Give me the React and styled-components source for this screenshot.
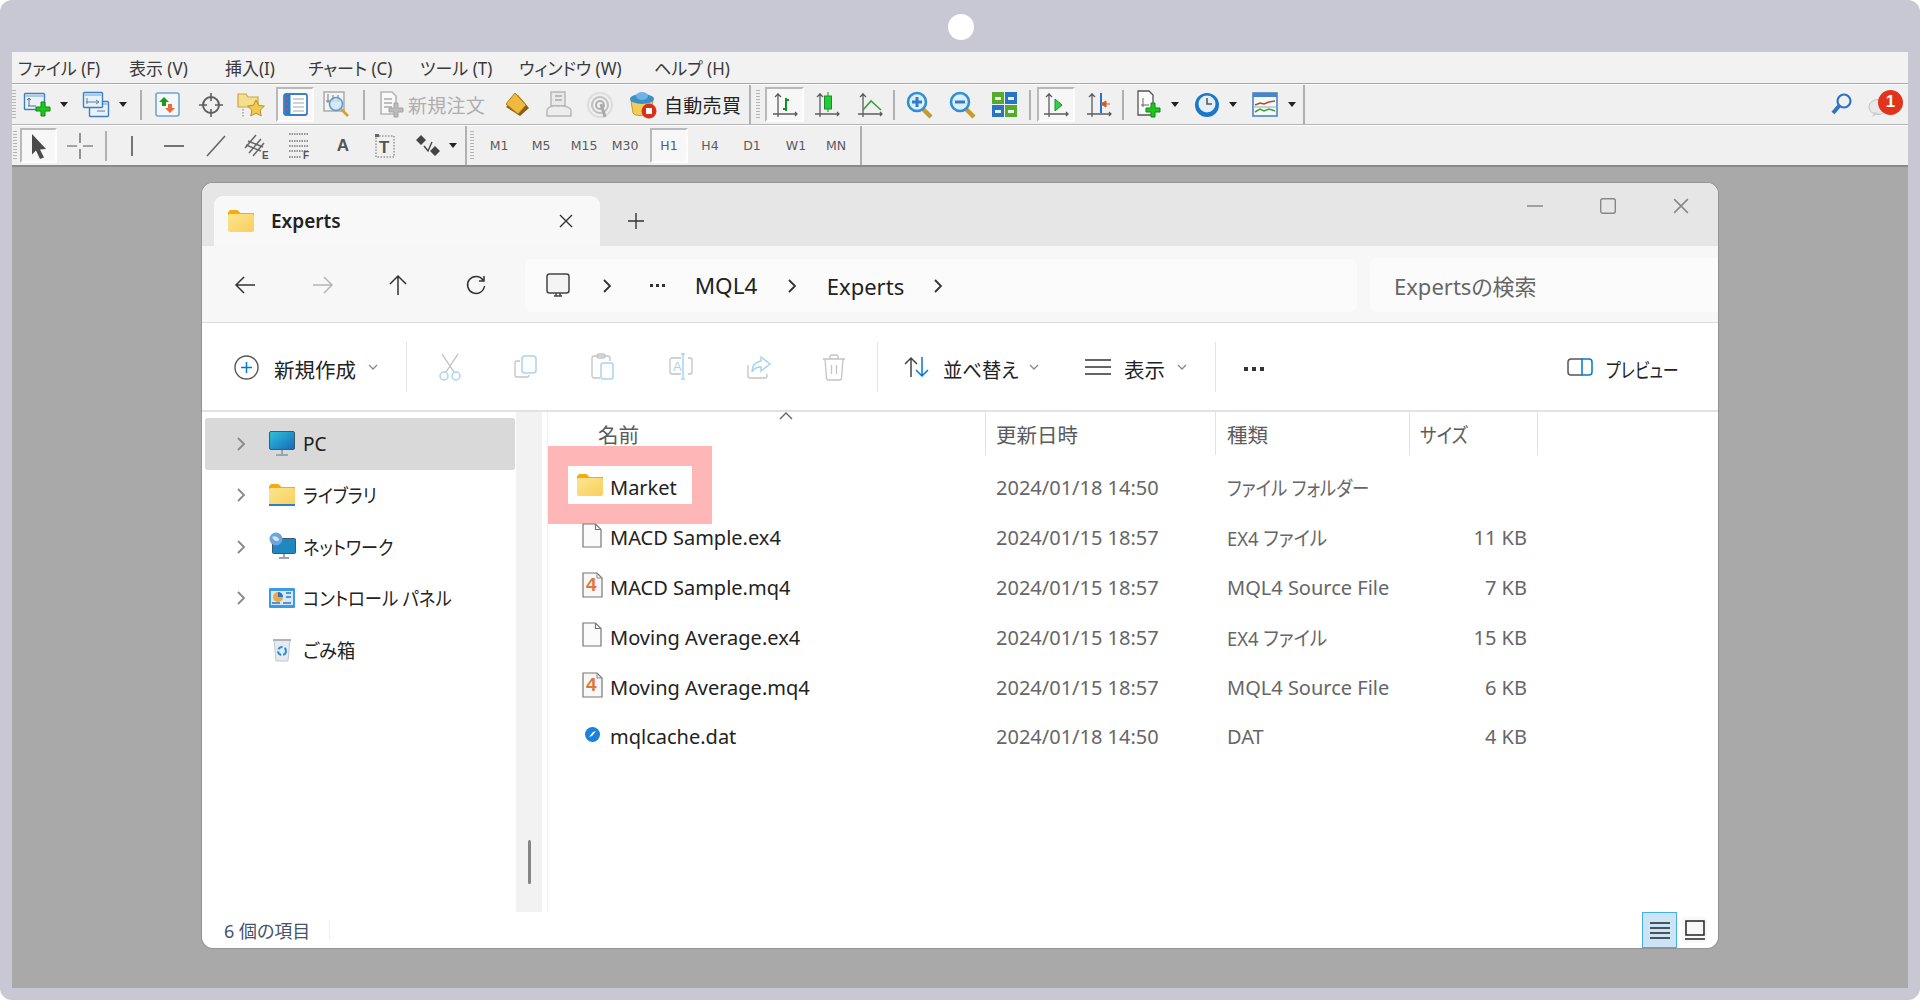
import React from 'react'
import styled, { createGlobalStyle } from 'styled-components'

const GlobalStyle = createGlobalStyle`
  html, body { margin: 0; background: #fff; }
  body {
    font-family: "Noto Sans", "Noto Sans CJK JP", sans-serif;
    font-feature-settings: "palt";
    color: #222;
  }
  svg { display: block; flex: none; overflow: visible; }
`

const Frame = styled.div`
  height: 1000px;
  box-sizing: border-box;
  padding: 52px 12px 12px;
  background: #c8c8d4;
  border-radius: 12px;
  position: relative;
`

const Camera = styled.div`
  position: absolute;
  left: 948px;
  top: 14px;
  width: 26px;
  height: 26px;
  border-radius: 50%;
  background: #fff;
`

const AppShell = styled.div`
  height: 100%;
  display: flex;
  flex-direction: column;
  background: #a9a9a9;
`

// the reference font has narrow kana, so kana heavy labels get squeezed
const Squeeze = styled.span`
  display: inline-block;
  white-space: nowrap;
  transform: scaleX(${p => p.$sx || 1});
  transform-origin: left center;
`

/* ---------- MT4 chrome ---------- */

const MenuBar = styled.div`
  height: 31px;
  box-sizing: content-box;
  display: flex;
  align-items: center;
  padding-left: 6px;
  background: #f2f2f2;
  border-bottom: 1px solid #a8a8a8;
`

const MenuItem = styled.span`
  width: ${p => p.$w}px;
  flex: none;
  font-size: 17.5px;
  white-space: nowrap;
  color: #3a3a3a;
`

const ToolRow = styled.div`
  height: ${p => p.$h}px;
  display: flex;
  align-items: center;
  background: #f0f0f0;
  border-top: 1px solid #fff;
  border-bottom: ${p => p.$bottom};
  box-sizing: border-box;
`

const Grip = styled.div`
  flex: none;
  width: 4px;
  height: 30px;
  margin-left: ${p => p.$ml || 0}px;
  margin-right: ${p => p.$mr || 0}px;
  background: repeating-linear-gradient(to bottom, #b4b4b4 0 1px, transparent 1px 3px);
`

const ToolSep = styled.div`
  flex: none;
  width: 2px;
  height: ${p => p.$h || 30}px;
  margin-left: ${p => p.$ml || 0}px;
  margin-right: ${p => p.$mr || 0}px;
  background: #b0b0b0;
`

const Cell = styled.div`
  flex: none;
  width: ${p => p.$w}px;
  height: ${p => (p.$pressed ? 35 : 30)}px;
  margin-left: ${p => p.$ml || 0}px;
  display: flex;
  align-items: center;
  justify-content: center;
  box-sizing: border-box;
  ${p => p.$pressed && `
    background: #f7f7f7;
    border-top: 2px solid #b9b9b9;
    border-left: 2px solid #b9b9b9;
    border-right: 2px solid #fdfdfd;
    border-bottom: 2px solid #fdfdfd;
  `}
`

const Caret = styled.div`
  width: 0;
  height: 0;
  border-left: 4px solid transparent;
  border-right: 4px solid transparent;
  border-top: 5px solid #222;
`

const ToolLabel = styled.span`
  flex: none;
  width: ${p => p.$w}px;
  margin-left: ${p => p.$ml || 0}px;
  font-size: 19px;
  letter-spacing: 0.3px;
  white-space: nowrap;
  color: ${p => (p.$muted ? '#aeaeae' : '#222')};
`

const Period = styled.span`
  font-family: "DejaVu Sans", sans-serif;
  font-size: 12.5px;
  color: #5a5a5a;
`

const RightTools = styled.div`
  margin-left: auto;
  display: flex;
  align-items: center;
  width: 78px;
  height: 24px;
  gap: 16px;
  position: relative;
`

const ChatWrap = styled.div`
  margin-top: 7px;
`

const Badge = styled.div`
  position: absolute;
  left: 48px;
  top: -3px;
  width: 25px;
  height: 25px;
  border-radius: 50%;
  background: #e2341d;
  color: #fff;
  font: 700 17px "Liberation Sans", sans-serif;
  display: flex;
  align-items: center;
  justify-content: center;
`

const Workspace = styled.div`
  flex: 1;
  display: flex;
  align-items: flex-start;
  padding: 16px 0 0 190px;
  border-top: 2px solid #8a8a8a;
`

/* ---------- Explorer window ---------- */

const Win = styled.div`
  width: 1516px;
  height: 765px;
  display: flex;
  flex-direction: column;
  background: #fff;
  border-radius: 11px;
  box-shadow: 0 0 0 1px #939393;
  overflow: hidden;
`

const TitleBar = styled.div`
  height: 63px;
  flex: none;
  box-sizing: border-box;
  padding: 13px 0 0 12px;
  display: flex;
  background: #e6e6e6;
`

const Tab = styled.div`
  width: 386px;
  height: 50px;
  box-sizing: border-box;
  padding: 0 27px 0 14px;
  display: flex;
  align-items: center;
  background: #f8f8f8;
  border-radius: 9px 9px 0 0;
`

const TabTitle = styled.span`
  margin-left: 17px;
  font-size: 19px;
  font-weight: 600;
  color: #222;
`

const TabClose = styled.div`
  margin-left: auto;
`

const NewTab = styled.div`
  margin-left: 28px;
  height: 50px;
  display: flex;
  align-items: center;
`

const WinControls = styled.div`
  margin-left: auto;
  margin-top: -13px;
  display: flex;
  height: 46px;
`

const WinControl = styled.div`
  width: ${p => p.$w}px;
  display: flex;
  align-items: center;
  justify-content: center;
`

const AddressRow = styled.div`
  height: 77px;
  flex: none;
  box-sizing: border-box;
  padding: 13px 0 0 5px;
  display: flex;
  background: #f7f7f7;
  border-bottom: 1px solid #dcdcdc;
`

const NavButton = styled.div`
  width: ${p => p.$w}px;
  height: 52px;
  display: flex;
  align-items: center;
  justify-content: center;
`

const AddressBox = styled.div`
  width: 832px;
  height: 53px;
  margin-left: 9px;
  box-sizing: border-box;
  padding-left: 20px;
  display: flex;
  align-items: center;
  background: #fbfbfb;
  border-radius: 7px;
`

const Crumb = styled.div`
  flex: none;
  width: ${p => p.$w}px;
  margin-left: ${p => p.$ml || 0}px;
  display: flex;
  justify-content: center;
  font-size: ${p => p.$fs || 22}px;
  white-space: nowrap;
  color: #222;
`

const SearchBox = styled.div`
  flex: 1;
  height: 54px;
  margin-left: 13px;
  margin-top: -1px;
  box-sizing: border-box;
  padding-left: 24px;
  display: flex;
  align-items: center;
  background: #fbfbfb;
  border-radius: 7px 0 0 7px;
  font-size: 22px;
  color: #666;
`

const CommandBar = styled.div`
  height: 89px;
  flex: none;
  box-sizing: border-box;
  padding: 5px 41px 0 32px;
  display: flex;
  align-items: center;
  background: #fff;
  border-bottom: 2px solid #e2e2e2;
`

const CmdIcon = styled.div`
  flex: none;
  width: ${p => p.$w}px;
  margin-left: ${p => p.$ml || 0}px;
  margin-top: ${p => p.$mt ?? -4}px;
  display: flex;
  justify-content: center;
`

const CmdText = styled.span`
  flex: none;
  width: ${p => p.$w}px;
  margin-left: ${p => p.$ml || 0}px;
  font-size: 20.5px;
  white-space: nowrap;
  color: #222;
`

const CmdSep = styled.div`
  flex: none;
  width: 1px;
  height: 50px;
  margin-left: ${p => p.$ml}px;
  margin-top: -4px;
  background: #e4e4e4;
`

const Body = styled.div`
  flex: 1;
  min-height: 0;
  display: flex;
`

const Nav = styled.div`
  width: 314px;
  flex: none;
  box-sizing: border-box;
  padding: 6px 0 0 3px;
`

const NavRow = styled.div`
  width: 310px;
  height: 51.5px;
  box-sizing: border-box;
  padding-left: 30px;
  display: flex;
  align-items: center;
  border-radius: 3px;
  background: ${p => (p.$selected ? '#d9d9d9' : 'transparent')};
`

const NavChevron = styled.div`
  width: 12px;
  flex: none;
  display: flex;
  justify-content: center;
`

const NavIcon = styled.div`
  width: 26px;
  flex: none;
  margin-left: 22px;
  display: flex;
  justify-content: center;
`

const NavLabel = styled.span`
  margin-left: 8px;
  font-size: 19px;
  white-space: nowrap;
  color: #222;
`

const NavScroll = styled.div`
  width: 26px;
  flex: none;
  box-sizing: border-box;
  padding-bottom: 28px;
  display: flex;
  justify-content: center;
  align-items: flex-end;
  background: #f2f2f2;
`

const NavThumb = styled.div`
  width: 3px;
  height: 44px;
  border-radius: 2px;
  background: #858585;
`

const Main = styled.div`
  flex: 1;
  margin-left: 5px;
  border-left: 1px solid #f0f0f0;
`

const HeaderRow = styled.div`
  height: 43px;
  display: grid;
  grid-template-columns: 438px 230px 194px 128px;
  position: relative;
`

const HeaderCell = styled.div`
  box-sizing: border-box;
  padding-left: ${p => p.$pl}px;
  display: flex;
  align-items: center;
  font-size: 20.5px;
  color: #5b5b5b;
  border-right: 1px solid #e2e2e2;
`

const SortMark = styled.div`
  position: absolute;
  left: 231px;
  top: 0;
`

const FileList = styled.div`
  padding-top: 8px;
`

const FileRow = styled.div`
  height: 49.8px;
  display: grid;
  grid-template-columns: 438px 230px 194px 128px;
  align-items: center;
  font-size: 20px;
  color: #666;
`

const NameCell = styled.div`
  padding-left: 33px;
  display: flex;
  align-items: center;
  color: #222;
  white-space: nowrap;
`

const FileIcon = styled.div`
  width: 22px;
  flex: none;
  margin-right: 7px;
  margin-top: -5px;
  display: flex;
  justify-content: center;
`

const HighlightedName = styled.div`
  width: 124px;
  height: 38px;
  margin: 0 0 6px 20px;
  box-sizing: border-box;
  padding: 6px 0 0 9px;
  display: flex;
  align-items: center;
  gap: 7px;
  background: #fff;
  box-shadow: 0 0 0 20px #ffb6b6;
  color: #222;
`

const MarketFolder = styled.div`
  margin-top: -5px;
`

const TextCell = styled.div`
  padding-left: ${p => p.$pl}px;
  white-space: nowrap;
`

const SizeCell = styled.div`
  padding-right: 11px;
  text-align: right;
`

const StatusBar = styled.div`
  flex: none;
  height: 36px;
  box-sizing: border-box;
  padding: 0 11px 0 22px;
  display: flex;
  align-items: center;
  font-size: 18px;
  color: #44546a;
`

const StatusSep = styled.div`
  width: 1px;
  height: 18px;
  margin-left: 19px;
  background: #eee;
`

const ViewButton = styled.div`
  height: ${p => (p.$active ? 36 : 26)}px;
  width: ${p => (p.$active ? 35 : 25)}px;
  margin-left: ${p => (p.$active ? 'auto' : '5px')};
  box-sizing: border-box;
  display: flex;
  align-items: center;
  justify-content: center;
  border: ${p => (p.$active ? '1.5px solid #47ade6' : 'none')};
  background: ${p => (p.$active ? '#cce4f7' : '#f8f8f8')};
  border-radius: ${p => (p.$active ? 0 : 3)}px;
`

/* ---------- toolbar icons ---------- */

const Plus = ({ x, y, fill = '#1fc61f', stroke = '#0d8a0d' }) => (
  <path transform={`translate(${x} ${y})`} d="M5 0h4v5h5v4H9v5H5V9H0V5h5z" fill={fill} stroke={stroke} strokeWidth="1" />
)

const ChartWin = ({ x = 0, y = 0, w = 19, h = 15 }) => (
  <g transform={`translate(${x} ${y})`}>
    <rect x="0.5" y="0.5" width={w} height={h} rx="1" fill="#e9f1f9" stroke="#3f7fc0" strokeWidth="1.4" />
    <path d={`M1 3h${w - 1}`} stroke="#a9c9e8" strokeWidth="2" />
  </g>
)

const NewChartIcon = () => (
  <svg width="27" height="24" viewBox="0 0 27 24">
    <ChartWin w={20} h={16} />
    <path d="M5 5v8M4 13h8M3 7l2-2 2 2" fill="none" stroke="#667" strokeWidth="1" />
    <Plus x={12} y={9} />
  </svg>
)

const CopyChartIcon = () => (
  <svg width="27" height="26" viewBox="0 0 27 26">
    <ChartWin x={6} y={9} w={19} h={15} />
    <ChartWin w={19} h={15} />
    <path d="M4 6v6M3 10h13M13 8l3 2-3 2M14 19h8" fill="none" stroke="#5f7f9f" strokeWidth="1" />
  </svg>
)

const MarketIcon = () => (
  <svg width="25" height="25" viewBox="0 0 25 25">
    <rect x="1" y="1" width="23" height="23" rx="2" fill="#f4f7fb" stroke="#6ea4da" strokeWidth="1.6" />
    <path d="M9 5l5 5h-3v4H7v-4H4z" fill="#12a012" />
    <path d="M15 21l-5-5h3v-4h4v4h3z" fill="#ef6a3a" />
  </svg>
)

const CrossIcon = () => (
  <svg width="24" height="24" viewBox="0 0 24 24" fill="none" stroke="#5e5e5e">
    <circle cx="12" cy="12" r="8" strokeWidth="2" />
    <path d="M12 0v8M12 16v8M0 12h8M16 12h8" strokeWidth="1.6" />
  </svg>
)

const FavIcon = () => (
  <svg width="28" height="26" viewBox="0 0 28 26">
    <path d="M1 2h8l2 3h10v10H1z" fill="#f5df8c" stroke="#caa545" strokeWidth="1.2" />
    <path d="M19 8l2.6 5.3 5.8.8-4.2 4 1 5.8-5.2-2.8-5.2 2.8 1-5.8-4.2-4 5.8-.8z" fill="#f2c94a" stroke="#b98f2c" strokeWidth="1" />
    <path d="M6 17v8" stroke="#777" strokeDasharray="1.5 1.5" />
  </svg>
)

const NavigatorIcon = () => (
  <svg width="25" height="23" viewBox="0 0 25 23">
    <rect x="1" y="1" width="23" height="21" rx="2" fill="#fff" stroke="#3d7fc2" strokeWidth="1.8" />
    <rect x="1.5" y="1.5" width="6" height="20" fill="#2c7cc6" />
    <path d="M10 6h11M10 10h11M10 14h11M10 18h11" stroke="#9aa7b5" />
    <path d="M4 5v2M4 10v2M4 15v2" stroke="#e44" strokeWidth="1.5" />
  </svg>
)

const DataWinIcon = () => (
  <svg width="28" height="27" viewBox="0 0 28 27">
    <rect x="1" y="1" width="20" height="19" fill="#f4f4f4" stroke="#aaa" strokeWidth="1.5" />
    <path d="M5 3v9M3 10h14M10 4v7M15 4v7" stroke="#777" fill="none" />
    <circle cx="13" cy="13" r="6.5" fill="#cfe5f7" fillOpacity="0.8" stroke="#5f9bcf" strokeWidth="1.6" />
    <path d="M18 18l7 7" stroke="#d9a02e" strokeWidth="2.6" />
  </svg>
)

const OrderIcon = () => (
  <svg width="26" height="28" viewBox="0 0 26 28">
    <path d="M2 1h11l4 4v18H2z" fill="#f8f8f8" stroke="#b5b5b5" strokeWidth="1.6" />
    <path d="M5 8h8M5 12h8M5 16h8" stroke="#aaa" strokeWidth="1.5" />
    <Plus x={10} y={12} fill="#bcbcbc" stroke="#a5a5a5" />
  </svg>
)

const DiamondIcon = () => (
  <svg width="26" height="26" viewBox="0 0 26 26">
    <path d="M14 3l11 13-9 8L2 15z" fill="#8d5c12" />
    <path d="M11 1l11 12-8 9L2 12z" fill="#eeb93c" stroke="#b57e1d" />
  </svg>
)

const ArchiveIcon = () => (
  <svg width="26" height="27" viewBox="0 0 26 27">
    <path d="M5 1h14v14H5z" fill="#e9e9e9" stroke="#b5b5b5" strokeWidth="1.4" />
    <path d="M9 5h7M9 9h7" stroke="#aaa" strokeWidth="1.6" />
    <path d="M1 20c0-4 6-6 11-5 5-1 13 1 13 5v5H1z" fill="#ededed" stroke="#b5b5b5" strokeWidth="1.4" />
  </svg>
)

const SignalIcon = () => (
  <svg width="26" height="26" viewBox="0 0 26 26" fill="none">
    <circle cx="13" cy="13" r="12" stroke="#dcdcdc" strokeWidth="2" />
    <circle cx="13" cy="13" r="8" stroke="#c0c0c0" strokeWidth="2" />
    <circle cx="13" cy="13" r="4" stroke="#b0b0b0" strokeWidth="2" />
    <path d="M14 12l4 13" stroke="#aaa" strokeWidth="3" />
  </svg>
)

const AutoIcon = () => (
  <svg width="28" height="28" viewBox="0 0 28 28">
    <path d="M2 10h22l-3 12c-1 3-15 4-17 0z" fill="#f2cd5a" stroke="#c59b33" />
    <ellipse cx="13" cy="8" rx="12" ry="5" fill="#3d8fc9" />
    <ellipse cx="13" cy="5" rx="6" ry="4" fill="#6db4e2" />
    <circle cx="20" cy="20" r="7.5" fill="#d9301c" />
    <rect x="17" y="17" width="6" height="6" fill="#fff" />
  </svg>
)

const AxesPlain = ({ children }) => (
  <svg width="26" height="28" viewBox="0 0 26 28">
    <path d="M6 2v24M1 23h24M23 21l2 2-2 2M3 6l3-3 3 3" fill="none" stroke="#5c5c5c" strokeWidth="1.3" />
    {children}
  </svg>
)

const BarChartIcon = () => (
  <AxesPlain>
    <path d="M14 7v13M14 18h-3M14 9h3" fill="none" stroke="#14902a" strokeWidth="2" />
  </AxesPlain>
)

const CandleIcon = () => (
  <AxesPlain>
    <path d="M14 1v20" stroke="#14902a" />
    <rect x="10.5" y="5" width="7" height="13" fill="#25c93a" stroke="#14902a" />
  </AxesPlain>
)

const LineChartIcon = () => (
  <AxesPlain>
    <path d="M6 19l8-9 10 9" fill="none" stroke="#3aa23a" strokeWidth="1.6" />
  </AxesPlain>
)

const ScrollIcon = () => (
  <AxesPlain>
    <path d="M12 8l7 6-7 6z" fill="#36d04a" stroke="#14902a" />
  </AxesPlain>
)

const ShiftIcon = () => (
  <AxesPlain>
    <path d="M15 2v20" stroke="#2f6fc0" strokeWidth="2" />
    <path d="M24 13h-4v-3l-5 3 5 3v-3" fill="#d65a20" stroke="#d65a20" />
  </AxesPlain>
)

const ZoomIcon = ({ minus }) => (
  <svg width="27" height="28" viewBox="0 0 27 28">
    <path d="M16 17l9 9" stroke="#c89a2c" strokeWidth="4.5" />
    <circle cx="11" cy="11" r="9" fill="#dceefb" stroke="#2f8ed4" strokeWidth="2.6" />
    <path d={minus ? 'M6 11h10' : 'M6 11h10M11 6v10'} stroke="#2f7fc4" strokeWidth="3" />
  </svg>
)

const TileIcon = () => (
  <svg width="25" height="25" viewBox="0 0 25 25">
    <rect x="0" y="0" width="12" height="12" fill="#55ab2c" />
    <rect x="13" y="0" width="12" height="12" fill="#2a74c8" />
    <rect x="0" y="13" width="12" height="12" fill="#2a74c8" />
    <rect x="13" y="13" width="12" height="12" fill="#55ab2c" />
    <path d="M3 5h6v3H3zM16 5h6v3h-6zM3 18h6v3H3zM16 18h6v3h-6z" fill="#e9f4e4" />
  </svg>
)

const IndicatorIcon = () => (
  <svg width="28" height="30" viewBox="0 0 28 30">
    <path d="M2 1h11l4 4v20H2z" fill="#fbfbfb" stroke="#555" strokeWidth="1.3" />
    <path d="M7 8v9M5 15h8" stroke="#666" fill="none" />
    <Plus x={10} y={13} />
  </svg>
)

const ClockIcon = () => (
  <svg width="26" height="26" viewBox="0 0 26 26">
    <circle cx="13" cy="13" r="12" fill="#1b78c8" />
    <circle cx="13" cy="12" r="8.5" fill="#e4eef6" />
    <path d="M13 6v6h5" fill="none" stroke="#555" strokeWidth="1.5" />
  </svg>
)

const TemplateIcon = () => (
  <svg width="26" height="25" viewBox="0 0 26 25">
    <rect x="1" y="1" width="24" height="23" fill="#f6f8fb" stroke="#4a86c5" strokeWidth="1.6" />
    <rect x="1" y="1" width="24" height="4" fill="#4a86c5" />
    <path d="M3 13l5-2 4 1 5-2 6-1" fill="none" stroke="#b5501e" strokeWidth="1.5" />
    <path d="M3 20l5-3 4 2 5-2 6 2" fill="none" stroke="#3aa23a" strokeWidth="1.5" />
    <path d="M1 15h24" stroke="#9ab" />
  </svg>
)

const FinderIcon = () => (
  <svg width="22" height="24" viewBox="0 0 22 24" fill="none">
    <circle cx="14" cy="8" r="6.5" stroke="#2f72c4" strokeWidth="2.2" />
    <path d="M9 13l-6 7" stroke="#2f72c4" strokeWidth="4" />
  </svg>
)

const ChatIcon = () => (
  <svg width="20" height="18" viewBox="0 0 20 18">
    <ellipse cx="10" cy="8" rx="9" ry="7.5" fill="#e9e9e9" stroke="#c2c2c2" />
    <path d="M6 13l-2 5 7-4z" fill="#cfcfcf" />
  </svg>
)

const CursorIcon = () => (
  <svg width="20" height="26" viewBox="0 0 20 26">
    <path d="M3 1l14 15-6 .5 4 8-4 1.500-4-8.500-4 4z" fill="#4a4a4a" />
  </svg>
)

const CrosshairThin = () => (
  <svg width="26" height="26" viewBox="0 0 26 26" stroke="#555" strokeWidth="1.2">
    <path d="M13 0v10M13 16v10M0 13h10M16 13h10" />
  </svg>
)

const VLine = () => <svg width="4" height="22" viewBox="0 0 4 22"><path d="M2 1v20" stroke="#555" strokeWidth="1.6" /></svg>
const HLine = () => <svg width="20" height="4" viewBox="0 0 20 4"><path d="M0 2h20" stroke="#555" strokeWidth="1.6" /></svg>
const Trend = () => <svg width="20" height="22" viewBox="0 0 20 22"><path d="M1 21L19 1" stroke="#666" strokeWidth="1.6" /></svg>

const EquiIcon = () => (
  <svg width="26" height="28" viewBox="0 0 26 28">
    <path d="M1 16L12 3M5 21L17 7M9 24L20 11M2 13l15 6M4 9l15 6" fill="none" stroke="#666" strokeWidth="1.5" />
    <text x="18" y="27" fontFamily="Liberation Sans" fontWeight="700" fontSize="10" fill="#555">E</text>
  </svg>
)

const FiboIcon = () => (
  <svg width="26" height="26" viewBox="0 0 26 26">
    <path d="M1 1h20M1 8h20M1 13h20M1 18h20M1 24h12" fill="none" stroke="#777" strokeWidth="1.4" strokeDasharray="1.5 1" />
    <text x="15" y="26" fontFamily="Liberation Sans" fontWeight="700" fontSize="10" fill="#555">F</text>
  </svg>
)

const TextA = styled.span`
  font: 700 17px "Liberation Sans", sans-serif;
  color: #555;
`

const LabelIcon = () => (
  <svg width="20" height="24" viewBox="0 0 20 24">
    <rect x="1" y="2" width="18" height="21" fill="none" stroke="#666" strokeDasharray="1.5 1.5" />
    <rect x="0" y="0" width="4" height="3" fill="#666" />
    <text x="4" y="19" fontFamily="Liberation Sans" fontWeight="700" fontSize="17" fill="#555">T</text>
  </svg>
)

const ArrowsIcon = () => (
  <svg width="24" height="22" viewBox="0 0 24 22" fill="#444">
    <path d="M0 5l5-5 5 5-5 5zM14 16l5-5 5 5-5 5z" />
    <path d="M8 11l4 5 4-9" fill="none" stroke="#444" strokeWidth="1.4" />
  </svg>
)

/* ---------- explorer icons ---------- */

const FolderIcon = ({ w = 26, h = 22, line }) => (
  <svg width={w} height={h} viewBox="0 0 26 22">
    <defs>
      <linearGradient id="folderFill" x1="0" y1="0" x2="1" y2="1">
        <stop offset="0" stopColor="#fde58d" />
        <stop offset="1" stopColor="#f8cf5e" />
      </linearGradient>
    </defs>
    <path d="M1 1.500a1.500 1.500 0 0 1 1.500-1.500h7l3 3H26v4H0V2z" fill="#f3ad12" />
    <path d="M0 6a2 2 0 0 1 2-2h22a2 2 0 0 1 2 2v14a2 2 0 0 1-2 2H2a2 2 0 0 1-2-2z" fill="url(#folderFill)" />
    {line && <path d="M0 21h26" stroke="#2f7fc4" strokeWidth="2" />}
  </svg>
)

const Chevron = ({ color = '#333', size = 10 }) => (
  <svg width={size} height={size * 1.6} viewBox="0 0 10 16" fill="none" stroke={color} strokeWidth="1.800">
    <path d="M2 2l6 6-6 6" />
  </svg>
)

const DownMark = () => (
  <svg width="10" height="6" viewBox="0 0 10 6" fill="none" stroke="#888" strokeWidth="1.3">
    <path d="M1 1l4 4 4-4" />
  </svg>
)

const CloseMark = ({ size = 14, color = '#333', sw = 1.4 }) => (
  <svg width={size} height={size} viewBox="0 0 14 14" stroke={color} strokeWidth={sw}>
    <path d="M1 1l12 12M13 1L1 13" />
  </svg>
)

const PlusMark = () => (
  <svg width="16" height="16" viewBox="0 0 16 16" stroke="#333" strokeWidth="1.4">
    <path d="M8 0v16M0 8h16" />
  </svg>
)

const Arrow = ({ dir, color = '#333' }) => {
  const paths = {
    left: 'M1 10h19M9 2l-8 8 8 8',
    right: 'M1 10h19M12 2l8 8-8 8',
    up: 'M10 20V1M2 9l8-8 8 8',
  }
  return (
    <svg width="21" height="21" viewBox="0 0 21 21" fill="none" stroke={color} strokeWidth="1.5">
      <path d={paths[dir]} />
    </svg>
  )
}

const RefreshIcon = () => (
  <svg width="20" height="21" viewBox="0 0 20 21" fill="none" stroke="#333" strokeWidth="1.5">
    <path d="M17 5a8.500 8.500 0 1 0 1.500 6M18 1v5h-5" />
  </svg>
)

const MonitorIcon = () => (
  <svg width="24" height="26" viewBox="0 0 24 26" fill="none" stroke="#444">
    <rect x="1" y="1" width="22" height="19" rx="2.500" strokeWidth="1.500" fill="#f4f4f4" />
    <path d="M8 23h8M10 20v3M14 20v3" strokeWidth="1.500" />
  </svg>
)

const Dots = ({ size = 3, gap = 3, color = '#333' }) => (
  <svg width={size * 3 + gap * 2} height={size} viewBox={`0 0 ${size * 3 + gap * 2} ${size}`} fill={color}>
    <rect x="0" width={size} height={size} />
    <rect x={size + gap} width={size} height={size} />
    <rect x={(size + gap) * 2} width={size} height={size} />
  </svg>
)

const NewIcon = () => (
  <svg width="25" height="25" viewBox="0 0 25 25" fill="none">
    <circle cx="12.500" cy="12.500" r="11.500" stroke="#555" strokeWidth="1.400" />
    <path d="M12.500 7v11M7 12.500h11" stroke="#0078d4" strokeWidth="1.500" />
  </svg>
)

const CutIcon = () => (
  <svg width="24" height="28" viewBox="0 0 24 28" fill="none">
    <path d="M4 1l12 18M20 1L8 19" stroke="#bdbdbd" strokeWidth="1.300" />
    <circle cx="6" cy="23" r="4" stroke="#a9d3f2" strokeWidth="1.500" />
    <circle cx="18" cy="23" r="4" stroke="#a9d3f2" strokeWidth="1.500" />
  </svg>
)

const CopyIcon = () => (
  <svg width="24" height="24" viewBox="0 0 24 24" fill="none">
    <path d="M6 6H3a2 2 0 0 0-2 2v12a2 2 0 0 0 2 2h10a2 2 0 0 0 2-2" stroke="#c4c4c4" strokeWidth="1.300" />
    <rect x="8" y="1" width="14" height="17" rx="3" stroke="#a9d3f2" strokeWidth="1.500" />
  </svg>
)

const PasteIcon = () => (
  <svg width="24" height="28" viewBox="0 0 24 28" fill="none">
    <path d="M9 25H3a2 2 0 0 1-2-2V5a2 2 0 0 1 2-2h14a2 2 0 0 1 2 2v3" stroke="#c4c4c4" strokeWidth="1.300" />
    <rect x="6" y="1" width="8" height="4" rx="1.500" stroke="#c4c4c4" strokeWidth="1.300" />
    <rect x="10" y="10" width="12" height="16" rx="2" stroke="#a9d3f2" strokeWidth="1.500" />
  </svg>
)

const RenameIcon = () => (
  <svg width="26" height="28" viewBox="0 0 26 28" fill="none">
    <path d="M13 5H4a2 2 0 0 0-2 2v12a2 2 0 0 0 2 2h9M20 5h2a2 2 0 0 1 2 2v12a2 2 0 0 1-2 2h-2" stroke="#c4c4c4" strokeWidth="1.300" />
    <path d="M13 1h4M13 26h4M15 1v25" stroke="#a9d3f2" strokeWidth="1.500" />
    <text x="5" y="18" fontFamily="Liberation Sans" fontSize="13" fill="#a9d3f2">A</text>
  </svg>
)

const ShareIcon = () => (
  <svg width="24" height="24" viewBox="0 0 24 24" fill="none">
    <path d="M1 10v11a2 2 0 0 0 2 2h15a2 2 0 0 0 2-2v-2" stroke="#c4c4c4" strokeWidth="1.300" />
    <path d="M14 2l9 7-9 7v-4c-4 0-7 1-9 5 0-6 3-10 9-11z" stroke="#a9d3f2" strokeWidth="1.500" />
  </svg>
)

const TrashIcon = () => (
  <svg width="24" height="27" viewBox="0 0 24 27" fill="none" stroke="#c4c4c4" strokeWidth="1.300">
    <path d="M1 5h22M8 5V3a2 2 0 0 1 2-2h4a2 2 0 0 1 2 2v2M3 5l1.500 19a2 2 0 0 0 2 2h11a2 2 0 0 0 2-2L21 5M9.500 11v9M14.500 11v9" />
  </svg>
)

const SortIcon = () => (
  <svg width="26" height="22" viewBox="0 0 26 22" fill="none" strokeWidth="1.500">
    <path d="M7 21V2M1 8l6-6 6 6" stroke="#444" />
    <path d="M17 1v19M11 14l6 6 6-6" stroke="#0078d4" transform="translate(1 0)" />
  </svg>
)

const ViewIcon = () => (
  <svg width="26" height="18" viewBox="0 0 26 18" stroke="#333" strokeWidth="1.500">
    <path d="M0 2h26M0 9h26M0 16h26" />
  </svg>
)

const PreviewIcon = () => (
  <svg width="26" height="18" viewBox="0 0 26 18" fill="none" strokeWidth="1.500">
    <path d="M15 1H4a3 3 0 0 0-3 3v10a3 3 0 0 0 3 3h11" stroke="#555" />
    <path d="M15 1h7a3 3 0 0 1 3 3v10a3 3 0 0 1-3 3h-7z" stroke="#0078d4" />
  </svg>
)

const SortCaret = () => (
  <svg width="14" height="8" viewBox="0 0 14 8" fill="none" stroke="#666" strokeWidth="1.400">
    <path d="M1 7l6-6 6 6" />
  </svg>
)

const PcColor = () => (
  <svg width="26" height="25" viewBox="0 0 26 25">
    <defs>
      <linearGradient id="pcFill" x1="0" y1="0" x2="1" y2="1">
        <stop offset="0" stopColor="#2cc4dc" />
        <stop offset="1" stopColor="#1668b8" />
      </linearGradient>
    </defs>
    <rect x="0.500" y="0.500" width="25" height="18" rx="1.500" fill="url(#pcFill)" stroke="#3f5870" />
    <path d="M13 19v4M7 24h12" stroke="#9aa5ae" strokeWidth="2" />
  </svg>
)

const NetworkColor = () => (
  <svg width="27" height="27" viewBox="0 0 27 27">
    <rect x="3.500" y="5.500" width="23" height="15" rx="1" fill="#1f88c0" stroke="#3f5870" />
    <path d="M15 21v3M10 25h10" stroke="#9aa5ae" strokeWidth="2" />
    <circle cx="7" cy="6" r="6.500" fill="#6aa5dc" />
    <path d="M3 4c3-2 6 0 7 2s-3 3-5 1z" fill="#cfe3f5" />
  </svg>
)

const ControlColor = () => (
  <svg width="26" height="20" viewBox="0 0 26 20">
    <rect x="0" y="0" width="26" height="20" rx="1" fill="#3d9ae6" />
    <rect x="2" y="3" width="22" height="14" fill="#d5eafb" />
    <circle cx="9" cy="9" r="5" fill="#f2a93a" />
    <path d="M9 4v5h5a5 5 0 0 0-5-5z" fill="#2b77c6" />
    <path d="M17 5h5M17 9h5M3 15h8M14 15h8" stroke="#2b77c6" strokeWidth="1.500" />
  </svg>
)

const BinColor = () => (
  <svg width="20" height="24" viewBox="0 0 20 24">
    <path d="M2 2h16l-2 21H4z" fill="#e6eaee" stroke="#c4c9ce" />
    <path d="M1 2h18" stroke="#aeb4ba" strokeWidth="2" />
    <circle cx="10" cy="13" r="4" fill="none" stroke="#2b8fe0" strokeWidth="2" strokeDasharray="5 2" />
  </svg>
)

const DocIcon = () => (
  <svg width="20" height="25" viewBox="0 0 20 25" fill="#fbfbfb" stroke="#777" strokeWidth="1.200">
    <path d="M1 1h12.500L19 6.500V24H1zM13.500 1v5.500H19" />
  </svg>
)

const Mq4Icon = () => (
  <svg width="21" height="26" viewBox="0 0 21 26">
    <path d="M1 1h14l5 5v19H1z" fill="#f8f8f8" stroke="#777" strokeWidth="1.200" />
    <path d="M15 1v5h5" fill="none" stroke="#888" />
    <text x="4" y="19" fontFamily="Liberation Sans" fontWeight="700" fontSize="19" fill="#e0773a">4</text>
  </svg>
)

const DatIcon = () => (
  <svg width="15" height="15" viewBox="0 0 15 15">
    <circle cx="7.500" cy="7.500" r="7.500" fill="#1c80dc" />
    <path d="M4 10l3-1 4-5-3 1z" fill="#fff" />
  </svg>
)

const files = [
  { name: 'MACD Sample.ex4', date: '2024/01/15 18:57', type: 'EX4 ファイル', sx: 0.92, size: '11 KB', icon: <DocIcon /> },
  { name: 'MACD Sample.mq4', date: '2024/01/15 18:57', type: 'MQL4 Source File', size: '7 KB', icon: <Mq4Icon /> },
  { name: 'Moving Average.ex4', date: '2024/01/15 18:57', type: 'EX4 ファイル', sx: 0.92, size: '15 KB', icon: <DocIcon /> },
  { name: 'Moving Average.mq4', date: '2024/01/15 18:57', type: 'MQL4 Source File', size: '6 KB', icon: <Mq4Icon /> },
  { name: 'mqlcache.dat', date: '2024/01/18 14:50', type: 'DAT', size: '4 KB', icon: <DatIcon /> },
]

const navItems = [
  { label: 'PC', icon: <PcColor />, selected: true, expand: true },
  { label: 'ライブラリ', sx: 0.9, icon: <FolderIcon line />, expand: true },
  { label: 'ネットワーク', sx: 0.9, icon: <NetworkColor />, expand: true },
  { label: 'コントロール パネル', sx: 0.91, icon: <ControlColor />, expand: true },
  { label: 'ごみ箱', sx: 0.96, icon: <BinColor /> },
]

const menus = [
  { label: 'ファイル (F)', w: 111 },
  { label: '表示 (V)', w: 96 },
  { label: '挿入(I)', w: 83 },
  { label: 'チャート (C)', w: 112 },
  { label: 'ツール (T)', w: 99 },
  { label: 'ウィンドウ (W)', w: 135 },
  { label: 'ヘルプ (H)', w: 80 },
]

const App = () => (
  <Frame>
    <GlobalStyle />
    <Camera />
    <AppShell>
      <MenuBar>
        {menus.map(m => <MenuItem key={m.label} $w={m.w}><Squeeze $sx={0.97}>{m.label}</Squeeze></MenuItem>)}
      </MenuBar>

      <ToolRow $h={41} $bottom="1px solid #b5b5b5">
        <Grip $mr={4} />
        <Cell $w={34}><NewChartIcon /></Cell>
        <Cell $w={20}><Caret /></Cell>
        <Cell $w={44}><CopyChartIcon /></Cell>
        <Cell $w={10}><Caret /></Cell>
        <ToolSep $ml={12} $mr={4} />
        <Cell $w={42}><MarketIcon /></Cell>
        <Cell $w={46}><CrossIcon /></Cell>
        <Cell $w={34}><FavIcon /></Cell>
        <Cell $w={38} $ml={8} $pressed><NavigatorIcon /></Cell>
        <Cell $w={46}><DataWinIcon /></Cell>
        <ToolSep $ml={3} $mr={3} />
        <Cell $w={32} $ml={8}><OrderIcon /></Cell>
        <ToolLabel $w={78} $muted>新規注文</ToolLabel>
        <Cell $w={40} $ml={11}><DiamondIcon /></Cell>
        <Cell $w={40} $ml={2}><ArchiveIcon /></Cell>
        <Cell $w={40} $ml={1}><SignalIcon /></Cell>
        <Cell $w={38} $ml={4}><AutoIcon /></Cell>
        <ToolLabel $w={76} $ml={2}>自動売買</ToolLabel>
        <ToolSep $ml={9} $h={39} />
        <Grip $ml={5} $mr={5} />
        <Cell $w={39} $pressed><BarChartIcon /></Cell>
        <Cell $w={46}><CandleIcon /></Cell>
        <Cell $w={40}><LineChartIcon /></Cell>
        <ToolSep $ml={3} />
        <Cell $w={42} $ml={3}><ZoomIcon /></Cell>
        <Cell $w={44}><ZoomIcon minus /></Cell>
        <Cell $w={40}><TileIcon /></Cell>
        <ToolSep $ml={5} />
        <Cell $w={38} $ml={6} $pressed><ScrollIcon /></Cell>
        <Cell $w={44} $ml={2}><ShiftIcon /></Cell>
        <ToolSep $ml={1} />
        <Cell $w={40} $ml={6}><IndicatorIcon /></Cell>
        <Cell $w={10}><Caret /></Cell>
        <Cell $w={40} $ml={7}><ClockIcon /></Cell>
        <Cell $w={10} $ml={1}><Caret /></Cell>
        <Cell $w={40} $ml={7}><TemplateIcon /></Cell>
        <Cell $w={10} $ml={2}><Caret /></Cell>
        <ToolSep $ml={6} $h={39} />
        <RightTools>
          <FinderIcon />
          <ChatWrap><ChatIcon /></ChatWrap>
          <Badge>1</Badge>
        </RightTools>
      </ToolRow>

      <ToolRow $h={40} $bottom="none">
        <Grip $ml={1} $mr={1} />
        <Cell $w={37} $ml={2} $pressed><CursorIcon /></Cell>
        <Cell $w={46}><CrosshairThin /></Cell>
        <ToolSep $ml={2} />
        <Cell $w={50}><VLine /></Cell>
        <Cell $w={34}><HLine /></Cell>
        <Cell $w={50}><Trend /></Cell>
        <Cell $w={32}><EquiIcon /></Cell>
        <Cell $w={56}><FiboIcon /></Cell>
        <Cell $w={28}><TextA>A</TextA></Cell>
        <Cell $w={56}><LabelIcon /></Cell>
        <Cell $w={30}><ArrowsIcon /></Cell>
        <Cell $w={20}><Caret /></Cell>
        <ToolSep $ml={2} $h={39} />
        <Grip $ml={3} $mr={2} />
        <Cell $w={46}><Period>M1</Period></Cell>
        <Cell $w={38}><Period>M5</Period></Cell>
        <Cell $w={48}><Period>M15</Period></Cell>
        <Cell $w={34}><Period>M30</Period></Cell>
        <Cell $w={38} $ml={8} $pressed><Period>H1</Period></Cell>
        <Cell $w={44}><Period>H4</Period></Cell>
        <Cell $w={40}><Period>D1</Period></Cell>
        <Cell $w={48}><Period>W1</Period></Cell>
        <Cell $w={32}><Period>MN</Period></Cell>
        <ToolSep $ml={8} $h={39} />
      </ToolRow>

      <Workspace>
        <Win>
          <TitleBar>
            <Tab>
              <FolderIcon />
              <TabTitle>Experts</TabTitle>
              <TabClose><CloseMark /></TabClose>
            </Tab>
            <NewTab><PlusMark /></NewTab>
            <WinControls>
              <WinControl $w={72}>
                <svg width="16" height="2" viewBox="0 0 16 2"><path d="M0 1h16" stroke="#888" strokeWidth="1.400" /></svg>
              </WinControl>
              <WinControl $w={73}>
                <svg width="16" height="16" viewBox="0 0 16 16"><rect x="0.700" y="0.700" width="14.600" height="14.600" rx="2" fill="none" stroke="#888" strokeWidth="1.400" /></svg>
              </WinControl>
              <WinControl $w={74}><CloseMark size={16} color="#888" /></WinControl>
            </WinControls>
          </TitleBar>

          <AddressRow>
            <NavButton $w={77}><Arrow dir="left" /></NavButton>
            <NavButton $w={76}><Arrow dir="right" color="#b5b5b5" /></NavButton>
            <NavButton $w={76}><Arrow dir="up" /></NavButton>
            <NavButton $w={80}><RefreshIcon /></NavButton>
            <AddressBox>
              <Crumb $w={26}><MonitorIcon /></Crumb>
              <Crumb $w={16} $ml={28}><Chevron /></Crumb>
              <Crumb $w={24} $ml={30}><Dots size={3} gap={3} /></Crumb>
              <Crumb $w={64} $ml={25} $fs={22.5}>MQL4</Crumb>
              <Crumb $w={16} $ml={26}><Chevron /></Crumb>
              <Crumb $w={77} $ml={27}>Experts</Crumb>
              <Crumb $w={16} $ml={26}><Chevron /></Crumb>
            </AddressBox>
            <SearchBox>Expertsの検索</SearchBox>
          </AddressRow>

          <CommandBar>
            <CmdIcon $w={25}><NewIcon /></CmdIcon>
            <CmdText $w={84} $ml={15}>新規作成</CmdText>
            <CmdIcon $w={10} $ml={10}><DownMark /></CmdIcon>
            <CmdSep $ml={28} />
            <CmdIcon $w={40} $ml={23}><CutIcon /></CmdIcon>
            <CmdIcon $w={40} $ml={36}><CopyIcon /></CmdIcon>
            <CmdIcon $w={40} $ml={37}><PasteIcon /></CmdIcon>
            <CmdIcon $w={40} $ml={38}><RenameIcon /></CmdIcon>
            <CmdIcon $w={40} $ml={38}><ShareIcon /></CmdIcon>
            <CmdIcon $w={40} $ml={35}><TrashIcon /></CmdIcon>
            <CmdSep $ml={23} />
            <CmdIcon $w={26} $ml={26}><SortIcon /></CmdIcon>
            <CmdText $w={75} $ml={13}><Squeeze $sx={0.94}>並べ替え</Squeeze></CmdText>
            <CmdIcon $w={10} $ml={11}><DownMark /></CmdIcon>
            <CmdIcon $w={26} $ml={46}><ViewIcon /></CmdIcon>
            <CmdText $w={41} $ml={13}>表示</CmdText>
            <CmdIcon $w={10} $ml={12}><DownMark /></CmdIcon>
            <CmdSep $ml={28} />
            <CmdIcon $w={24} $ml={26} $mt={0}><Dots size={4} gap={4} /></CmdIcon>
            <CmdIcon $w={26} $ml={301}><PreviewIcon /></CmdIcon>
            <CmdText $w={71} $ml={13}><Squeeze $sx={0.78}>プレビュー</Squeeze></CmdText>
          </CommandBar>

          <Body>
            <Nav>
              {navItems.map(n => (
                <NavRow key={n.label} $selected={n.selected}>
                  <NavChevron>{n.expand && <Chevron color="#888" />}</NavChevron>
                  <NavIcon>{n.icon}</NavIcon>
                  <NavLabel><Squeeze $sx={n.sx}>{n.label}</Squeeze></NavLabel>
                </NavRow>
              ))}
            </Nav>
            <NavScroll><NavThumb /></NavScroll>
            <Main>
              <HeaderRow>
                <HeaderCell $pl={50}>名前<SortMark><SortCaret /></SortMark></HeaderCell>
                <HeaderCell $pl={10}>更新日時</HeaderCell>
                <HeaderCell $pl={11}>種類</HeaderCell>
                <HeaderCell $pl={10}><Squeeze $sx={0.86}>サイズ</Squeeze></HeaderCell>
              </HeaderRow>
              <FileList>
                <FileRow>
                  <div>
                    <HighlightedName>
                      <MarketFolder><FolderIcon /></MarketFolder>
                      Market
                    </HighlightedName>
                  </div>
                  <TextCell $pl={10}>2024/01/18 14:50</TextCell>
                  <TextCell $pl={11}><Squeeze $sx={0.87}>ファイル フォルダー</Squeeze></TextCell>
                  <SizeCell />
                </FileRow>
                {files.map(f => (
                  <FileRow key={f.name}>
                    <NameCell><FileIcon>{f.icon}</FileIcon>{f.name}</NameCell>
                    <TextCell $pl={10}>{f.date}</TextCell>
                    <TextCell $pl={11}><Squeeze $sx={f.sx}>{f.type}</Squeeze></TextCell>
                    <SizeCell>{f.size}</SizeCell>
                  </FileRow>
                ))}
              </FileList>
            </Main>
          </Body>

          <StatusBar>
            6 個の項目
            <StatusSep />
            <ViewButton $active>
              <svg width="22" height="18" viewBox="0 0 22 18" stroke="#222" strokeWidth="1.500"><path d="M1 2h20M1 7h20M1 12h20M1 17h20" /></svg>
            </ViewButton>
            <ViewButton>
              <svg width="20" height="20" viewBox="0 0 20 20" fill="none" stroke="#222" strokeWidth="1.500"><rect x="1" y="1" width="18" height="14" /><path d="M0 19h20" /></svg>
            </ViewButton>
          </StatusBar>
        </Win>
      </Workspace>
    </AppShell>
  </Frame>
)

export default App
